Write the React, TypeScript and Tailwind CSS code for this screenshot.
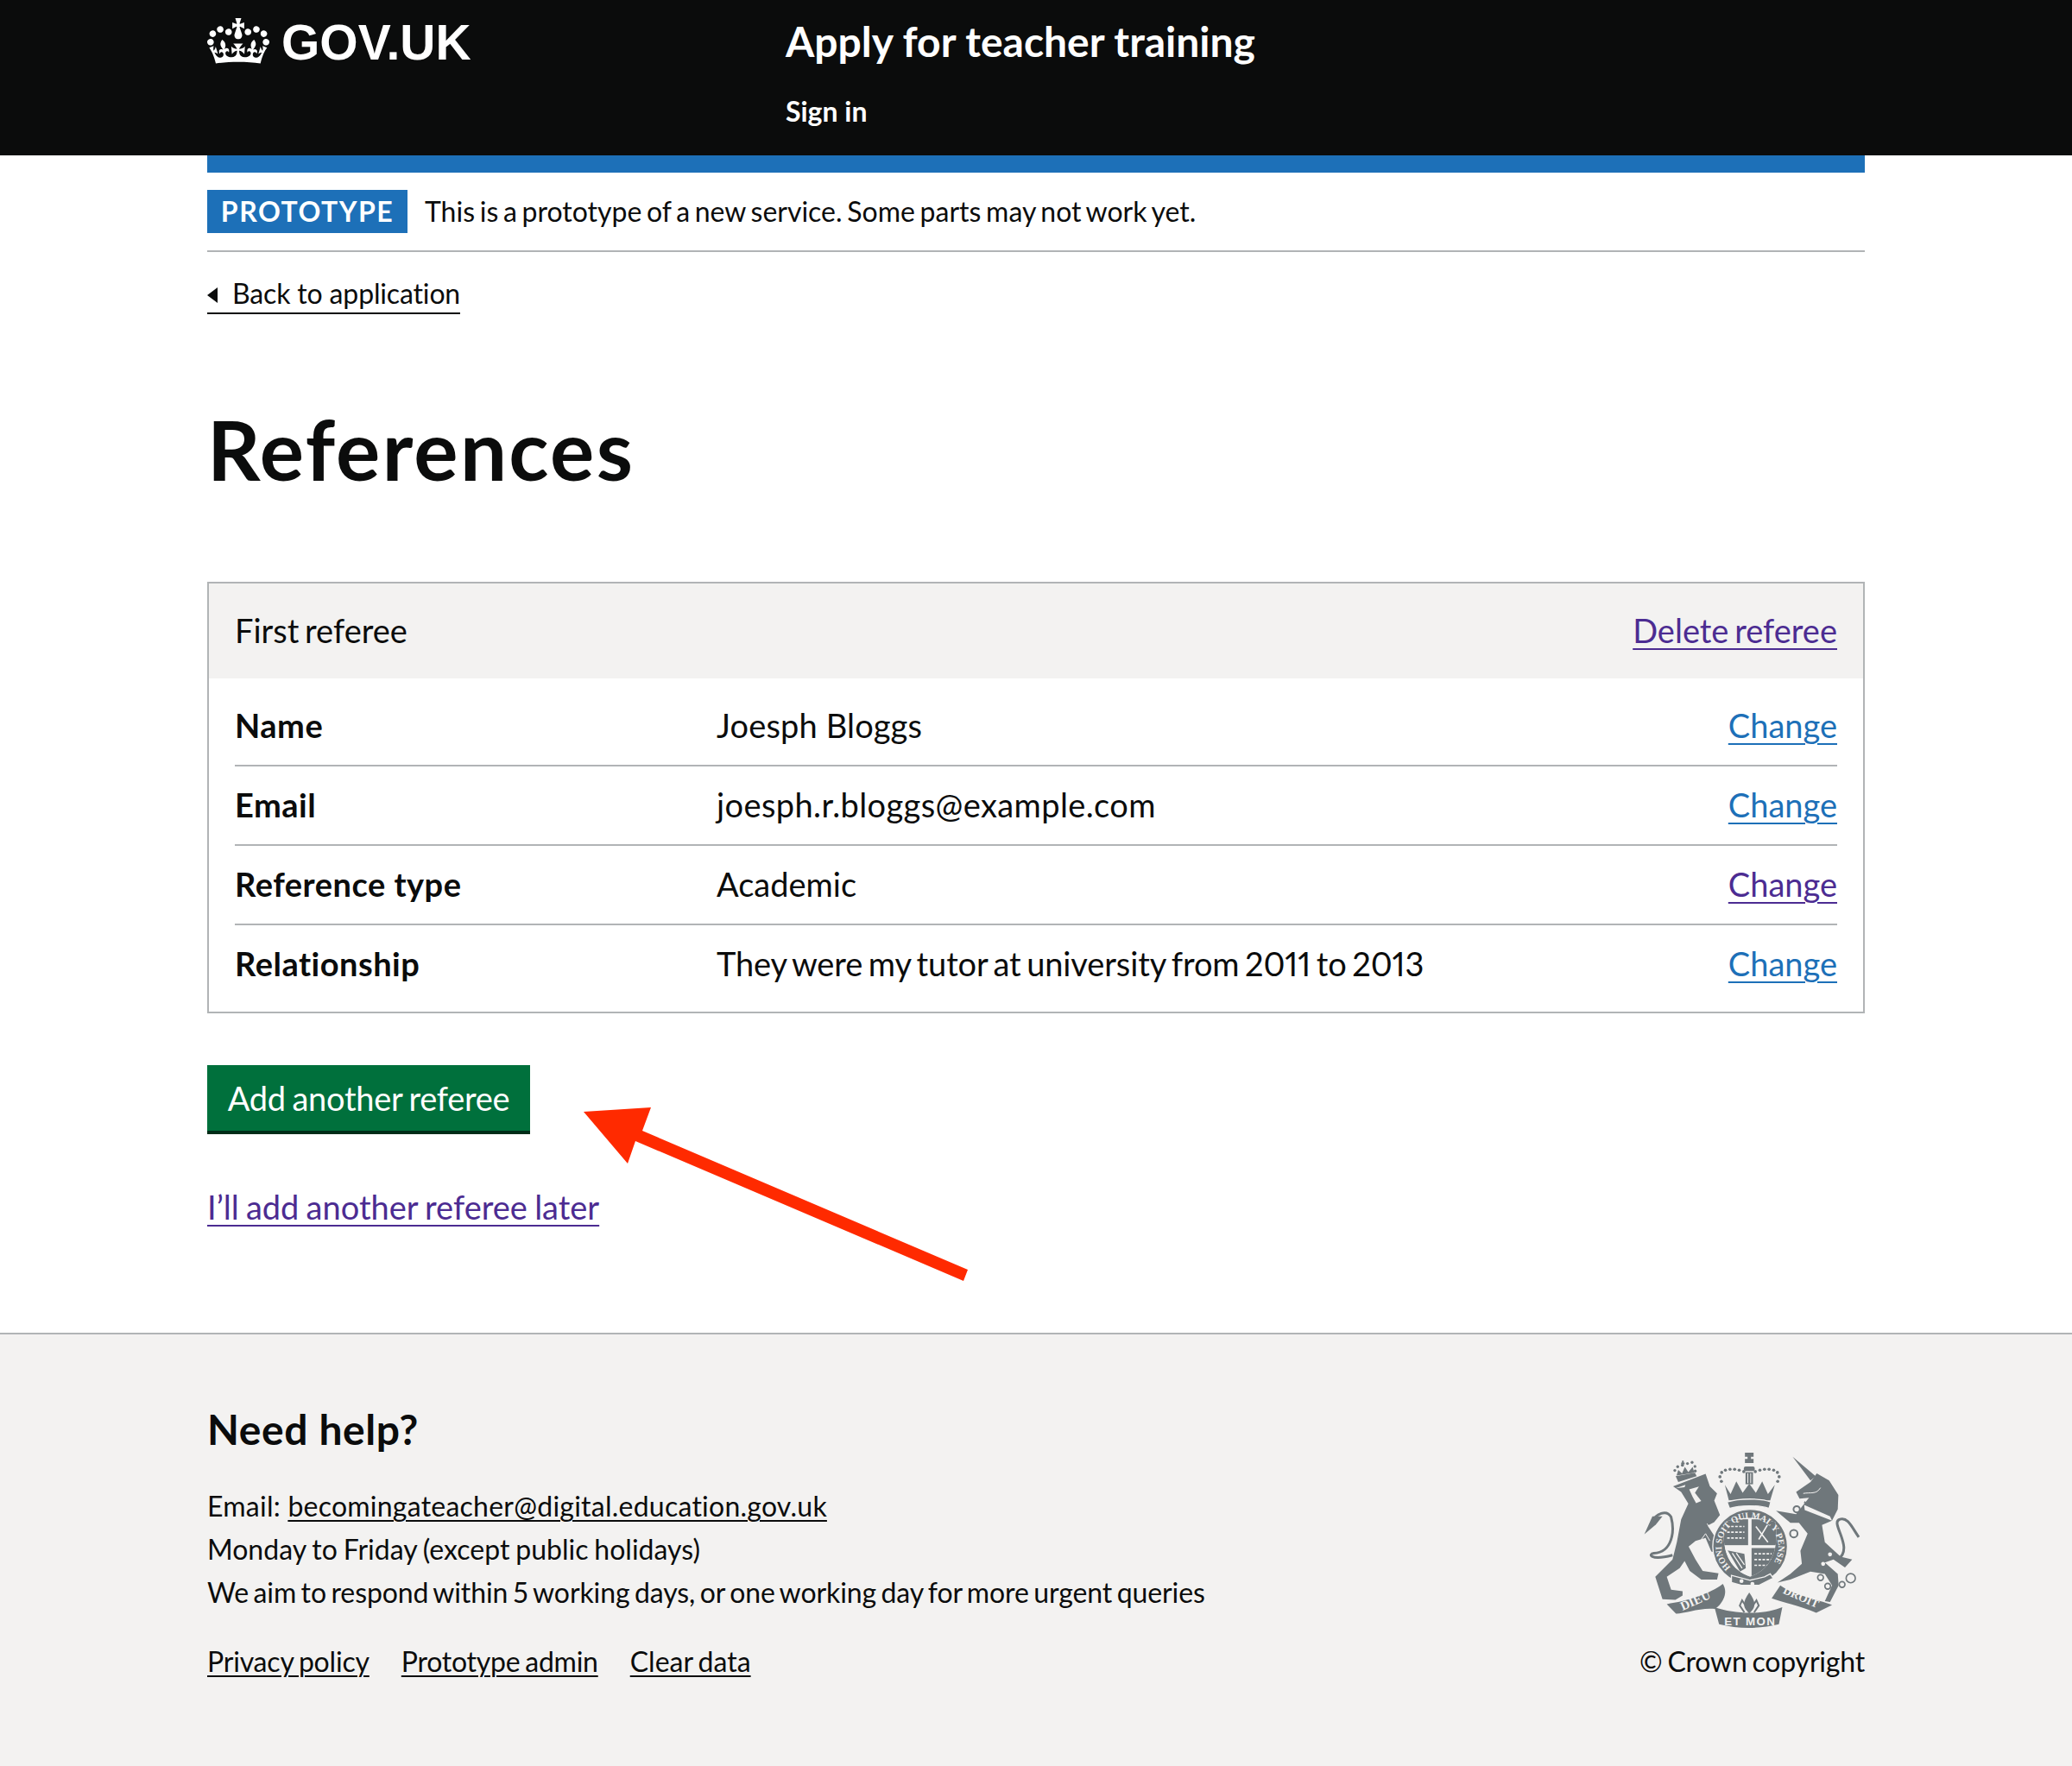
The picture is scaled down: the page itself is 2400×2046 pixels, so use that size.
import React from 'react';

const font = { fontFamily: '"Lato", "Noto Sans", sans-serif' };

const rows = [
  { key: 'Name', value: 'Joesph Bloggs', visited: false, fit: 'tracking-[0.15px]' },
  { key: 'Email', value: 'joesph.r.bloggs@example.com', visited: false, fit: 'tracking-[0.4px]' },
  { key: 'Reference type', value: 'Academic', visited: true, fit: '' },
  { key: 'Relationship', value: 'They were my tutor at university from 2011 to 2013', visited: false, fit: 'tracking-[-0.12px] [word-spacing:-3px]' },
];

const CrownLogo = () => (
  <svg viewBox="0 0 132 97" className="w-[72px] h-[53px] fill-white shrink-0">
    <path
      fillRule="evenodd"
      d="M25 30.2c3.5 1.5 7.7-.2 9.1-3.7 1.5-3.6-.2-7.8-3.9-9.2-3.6-1.4-7.6.3-9.1 3.9-1.4 3.5.3 7.5 3.9 9zM9 39.5c3.6 1.5 7.8-.2 9.2-3.7 1.5-3.6-.2-7.8-3.9-9.1-3.6-1.5-7.6.2-9.1 3.8-1.4 3.5.3 7.5 3.8 9zM4.4 57.2c3.5 1.5 7.7-.2 9.1-3.8 1.5-3.6-.2-7.7-3.9-9.1-3.5-1.5-7.6.3-9.1 3.8-1.4 3.5.3 7.6 3.9 9.1zm38.3-21.4c3.5 1.5 7.7-.2 9.1-3.8 1.5-3.6-.2-7.7-3.9-9.1-3.6-1.5-7.6.3-9.1 3.8-1.3 3.6.4 7.7 3.9 9.1zm64.4-5.6c-3.6 1.5-7.8-.2-9.1-3.7-1.5-3.6.2-7.8 3.8-9.2 3.6-1.4 7.7.3 9.2 3.9 1.3 3.5-.4 7.5-3.9 9zm15.9 9.3c-3.6 1.5-7.7-.2-9.1-3.7-1.5-3.6.2-7.8 3.7-9.1 3.6-1.5 7.7.2 9.2 3.8 1.5 3.5-.3 7.5-3.8 9zm4.7 17.7c-3.6 1.5-7.8-.2-9.2-3.8-1.5-3.6.2-7.7 3.9-9.1 3.6-1.5 7.7.3 9.2 3.8 1.3 3.5-.4 7.6-3.9 9.1zM89.3 35.8c-3.6 1.5-7.8-.2-9.2-3.8-1.4-3.6.2-7.7 3.9-9.1 3.6-1.5 7.7.3 9.2 3.8 1.4 3.6-.3 7.7-3.9 9.1zM69.7 17.7l8.9 4.7V9.3l-8.9 2.8c-.2-.3-.5-.6-.9-.9L72.4 0H59.6l3.5 11.2c-.3.3-.6.5-.9.9l-8.8-2.8v13.1l8.8-4.7c.3.3.6.7.9.9l-5 15.4v.1c-.2.8-.4 1.6-.4 2.4 0 4.1 3.1 7.5 7 8.1h.2c.3 0 .7.1 1 .1.4 0 .7 0 1-.1h.2c4-.6 7.1-4.1 7.1-8.1 0-.8-.1-1.7-.4-2.4V34l-5.1-15.4c.4-.2.7-.6 1-.9zM66 92.8c16.9 0 32.8 1.1 47.1 3.2 4-16.9 8.9-26.7 14-33.5l-9.6-3.4c1 4.9 1.1 7.2 0 10.2-1.5-1.4-3-4.3-4.2-8.7L108.6 76c2.8-2 5-3.2 7.5-3.3-4.4 9.4-10 11.9-13.6 11.2-4.3-.8-6.3-4.6-5.6-7.9 1-4.7 5.7-5.9 8-.5 4.3-8.7-3-11.4-7.6-8.8 7.1-7.2 7.9-13.5 2.1-21.1-8 6.1-8.1 12.3-4.5 20.8-4.7-5.4-12.1-2.5-9.5 6.2 3.4-5.2 7.9-2 7.2 3.1-.6 4.3-6.4 7.8-13.5 7.2-10.3-.9-10.9-8-11.2-13.8 2.5-.5 7.1 1.8 11 7.3L80.2 60c-4.1 4.4-8 5.3-12.3 5.4 1.4-4.4 8-11.6 8-11.6H55.5s6.4 7.2 7.9 11.6c-4.2-.1-8-1-12.3-5.4l1.4 16.4c3.9-5.5 8.5-7.7 10.9-7.3-.3 5.8-.9 12.8-11.1 13.8-7.2.6-12.9-2.9-13.5-7.2-.7-5 3.8-8.3 7.1-3.1 2.7-8.7-4.6-11.6-9.4-6.2 3.7-8.5 3.6-14.7-4.6-20.8-5.8 7.6-5 13.9 2.2 21.1-4.7-2.6-11.9.1-7.7 8.8 2.3-5.5 7.1-4.2 8.1.5.7 3.3-1.3 7.1-5.7 7.9-3.5.7-9-1.8-13.5-11.2 2.5.1 4.7 1.3 7.5 3.3l-4.7-15.4c-1.2 4.4-2.7 7.2-4.3 8.7-1.1-3-.9-5.3 0-10.2l-9.5 3.4c5 6.9 9.9 16.7 14 33.5 14.8-2.1 30.8-3.2 47.7-3.2z"
    />
  </svg>
);

// royal coat of arms, drawn by hand against the reference
const Crest = () => {
  const c = '#6f777b';
  const bg = '#f3f2f1';
  const beads = [
    [340, 168], [335, 152], [341, 137], [354, 129], [370, 126], [386, 126], [402, 129], [418, 134],
    [458, 134], [474, 129], [490, 126], [506, 126], [522, 129], [535, 137], [541, 152], [536, 168],
  ];
  const lionBeads = [
    [178, 130], [188, 117], [204, 112], [222, 106], [238, 102], [248, 116], [249, 132],
  ];
  const serif = { fontFamily: '"Liberation Serif", serif' };
  const sans = { fontFamily: '"Liberation Sans", sans-serif' };
  return (
    <svg viewBox="70 60 760 620" className="w-[253px] h-[207px] mr-[3px]">
      <defs>
        <path id="garter" d="M372 468 A99 99 0 1 1 510 465" />
        <clipPath id="shield">
          <path d="M350 310 Q440 280 528 310 C540 400 520 470 440 500 C360 470 340 400 350 310 Z" />
        </clipPath>
      </defs>
      {/* lion crown */}
      {lionBeads.map(([x, y]) => (
        <circle key={`${x}-${y}`} cx={x} cy={y} r="5" fill={c} />
      ))}
      <path d="M184 148 L190 128 L203 140 L213 118 L225 136 L240 118 L246 138 Z" fill={c} />
      <path d="M181 150 L248 138 L254 150 L190 170 Z" fill={c} />
      <path d="M200 106 h12 M206 96 v20" stroke={c} strokeWidth="6" />
      {/* lion */}
      <path
        d="M172 185 L285 142 L300 185 L325 210 L315 235 L335 285 L315 310 L292 322 L340 395 L335 420 L305 412 L285 365 L250 375 L226 395 L250 440 L275 480 L330 488 L325 510 L270 510 L230 480 L212 445 L195 470 L150 500 L165 545 L205 550 L205 565 L180 580 L135 578 L110 500 L170 440 L185 380 L200 300 L225 245 L200 205 Z"
        fill={c}
      />
      <path d="M228 196 L262 186 L248 208 L270 236 L252 244 L240 222 Z" fill={bg} />
      <path d="M180 192 L215 180 L212 188 Z" fill={bg} />
      <path d="M290 315 L330 370 M270 370 L285 350 L300 375" stroke={bg} strokeWidth="3" fill="none" />
      <path d="M170 425 C90 445 85 420 105 418 C170 415 178 340 165 292 C150 265 110 280 100 310" fill="none" stroke={c} strokeWidth="9" />
      <path d="M100 290 L72 352 L112 318 L135 290 Z" fill={c} />
      {/* unicorn */}
      <path d="M588 82 L668 150 L650 165 Z" fill={c} />
      <path
        d="M600 205 L650 170 L672 140 L715 165 L747 215 L745 265 L725 305 L690 320 L700 380 L755 430 L795 440 L770 468 L730 440 L700 450 L745 490 L748 530 L718 588 L700 585 L725 530 L700 490 L650 482 L580 510 L535 520 L580 490 L620 455 L615 410 L640 350 L610 312 L580 312 L530 270 L600 282 L625 250 L645 225 L612 228 Z"
        fill={c}
      />
      <path d="M628 250 L718 290 L725 305 L630 268 Z" fill={bg} />
      <path d="M628 240 L722 282" stroke={c} strokeWidth="6" strokeDasharray="5 5" />
      <path d="M625 210 C650 205 670 215 685 190" stroke={bg} strokeWidth="3" fill="none" />
      <circle cx="602" cy="265" r="11" fill={bg} stroke={c} strokeWidth="6" />
      <circle cx="592" cy="350" r="13" fill={bg} stroke={c} strokeWidth="6" />
      <circle cx="726" cy="373" r="9" fill={bg} />
      <circle cx="718" cy="422" r="7" fill={bg} />
      <circle cx="694" cy="455" r="7" fill={bg} />
      <path d="M745 440 C805 400 715 310 752 300 C780 290 795 330 818 362" fill="none" stroke={c} strokeWidth="9" />
      <circle cx="685" cy="503" r="10" fill="none" stroke={c} strokeWidth="5" />
      <circle cx="710" cy="533" r="10" fill="none" stroke={c} strokeWidth="5" />
      <circle cx="760" cy="527" r="10" fill="none" stroke={c} strokeWidth="5" />
      <circle cx="790" cy="505" r="16" fill="none" stroke={c} strokeWidth="5" />
      {/* royal crown */}
      {beads.map(([x, y]) => (
        <circle key={`${x}-${y}`} cx={x} cy={y} r="5.5" fill={c} />
      ))}
      <path d="M422 68 h30 v14 h-9 v8 h9 v14 h-30 v-14 h9 v-8 h-9 z" fill={c} />
      <rect x="418" y="116" width="38" height="16" rx="6" fill={c} />
      <rect x="424" y="136" width="26" height="42" fill={c} />
      <path d="M432 140 v34 M442 140 v34" stroke={bg} strokeWidth="3" />
      <path d="M352 180 L372 212 L392 168 L414 208 L437 176 L460 208 L482 168 L502 212 L526 180 L510 234 L366 234 Z" fill={c} />
      <path d="M360 240 C400 226 480 226 512 240 L506 262 C470 250 405 250 368 262 Z" fill={c} stroke={bg} strokeWidth="4" />
      {/* garter and shield */}
      <circle cx="440" cy="395" r="130" fill={c} stroke={bg} strokeWidth="4" />
      <path d="M350 310 Q440 280 528 310 C540 400 520 470 440 500 C360 470 340 400 350 310 Z" fill={bg} />
      <g clipPath="url(#shield)">
        <rect x="345" y="300" width="88" height="90" fill={c} />
        <rect x="445" y="300" width="88" height="90" fill={c} />
        <rect x="345" y="400" width="88" height="100" fill={bg} />
        <rect x="445" y="400" width="88" height="100" fill={c} />
        <path d="M360 325 h60 M360 345 h60 M360 365 h60 M455 420 h60 M455 440 h60 M455 460 h60" stroke={bg} strokeWidth="5" strokeDasharray="9 5" />
        <path d="M460 325 l42 55 M500 320 l-30 50" stroke={bg} strokeWidth="5" />
        <path d="M362 408 L420 420 L425 470 L405 482 Z" fill={c} />
        <path d="M378 418 L412 470 M392 418 L420 458" stroke={bg} strokeWidth="4" />
      </g>
      <text fill={bg} fontSize="31" fontWeight="700" style={serif}>
        <textPath href="#garter" textLength="448">HONI SOIT QUI MAL Y PENSE</textPath>
      </text>
      <path d="M375 495 L395 500 L440 512 L490 500 L510 490 L520 505 L470 530 L410 530 L375 520 Z" fill={c} stroke={bg} strokeWidth="4" />
      <circle cx="410" cy="515" r="7" fill={bg} />
      <circle cx="448" cy="525" r="7" fill={bg} />
      {/* fleur */}
      <path d="M437 555 C455 580 462 600 446 618 L437 628 L428 618 C412 600 419 580 437 555 Z" fill={c} />
      <path d="M424 600 L412 582 L404 600 L420 624 M450 600 L462 582 L470 600 L454 624" fill="none" stroke={c} strokeWidth="6" />
      {/* motto scroll */}
      <path d="M150 595 C220 585 300 560 345 525 C368 560 338 600 318 612 C270 605 205 630 182 628 Z" fill={c} />
      <path d="M545 530 C590 565 680 580 725 598 L670 625 C610 600 555 590 515 575 Z" fill={c} />
      <path d="M316 606 C390 632 490 632 552 606 L540 665 C470 682 400 682 332 665 Z" fill={c} />
      <text x="205" y="618" fill={bg} fontSize="44" fontWeight="700" transform="rotate(-24 205 618)" style={serif}>
        DIEU
      </text>
      <text x="350" y="668" fill={bg} fontSize="40" fontWeight="700" textLength="176" style={sans}>
        ET MON
      </text>
      <text x="552" y="556" fill={bg} fontSize="40" fontWeight="700" transform="rotate(24 552 556)" style={serif}>
        DROIT
      </text>
    </svg>
  );
};

const Arrow = () => (
  <svg className="absolute left-0 top-0 w-[2400px] h-[2046px] pointer-events-none" viewBox="0 0 2400 2046">
    <path d="M676 1288 L754 1283 L744 1310 L1121 1471 L1116 1484 L736 1322 L727 1348 Z" fill="#ff2a00" />
  </svg>
);

export default function App() {
  return (
    <div className="relative w-[2400px] h-[2046px] bg-white text-[#0b0c0c] overflow-hidden" style={font}>
      <header className="bg-[#0b0c0c] h-[180px] text-white">
        <div className="w-[1920px] mx-auto flex pt-[20px]">
          <div className="w-[670px] flex items-center gap-[14px] h-[54px]">
            <CrownLogo />
            <span className="text-[57px] leading-none font-bold pt-[5px]" style={{ fontFamily: '"Liberation Sans", sans-serif' }}>
              GOV.UK
            </span>
          </div>
          <div className="-mt-[2px]">
            <div className="text-[48px] leading-[60px] font-bold">Apply for teacher training</div>
            <div className="text-[32px] leading-[40px] font-bold mt-[31px]">Sign in</div>
          </div>
        </div>
      </header>

      <div className="w-[1920px] mx-auto">
        <div className="h-[20px] bg-[#1d70b8]" />
        <div className="h-[92px] border-b-2 border-[#b1b4b6] flex items-start pt-[20px] gap-[20px] text-[32px] leading-[50px]">
          <span className="bg-[#1d70b8] text-white font-bold h-[50px] w-[232px] text-center tracking-[1.5px] leading-[50px]">PROTOTYPE</span>
          <span className="[word-spacing:-2.5px]">This is a prototype of a new service. Some parts may not work yet.</span>
        </div>

        <a className="mt-[26px] inline-flex items-center h-[46px] border-b-2 border-[#0b0c0c] text-[32px] leading-[40px] tracking-[-0.15px]">
          <span className="w-0 h-0 border-y-[9px] border-y-transparent border-r-[12px] border-r-[#0b0c0c] mr-[17px] mt-[3px]" />
          Back to application
        </a>

        <h1 className="text-[96px] leading-[100px] font-bold mt-[106px] tracking-[2.3px]">References</h1>

        <div className="mt-[104px] border-2 border-[#b1b4b6]">
          <div className="h-[110px] bg-[#f3f2f1] px-[30px] pb-[2px] flex items-center justify-between text-[38px] [word-spacing:-3px]">
            <span>First referee</span>
            <a className="underline text-[#4c2c92] decoration-2 underline-offset-[6px]">Delete referee</a>
          </div>
          <div className="px-[30px] pt-[10px] pb-[10px]">
            {rows.map((row, i) => (
              <div
                key={row.key}
                className={`flex items-center pb-[2px] text-[38px] ${i < rows.length - 1 ? 'h-[92px] border-b-2 border-[#b1b4b6]' : 'h-[90px]'}`}
              >
                <span className="w-[558px] font-bold tracking-[0.5px]">{row.key}</span>
                <span className={`flex-1 proportional-nums ${row.fit}`}>{row.value}</span>
                <a className={`underline decoration-2 underline-offset-[6px] ${row.visited ? 'text-[#4c2c92]' : 'text-[#1d70b8]'}`}>Change</a>
              </div>
            ))}
          </div>
        </div>

        <button className="mt-[60px] block h-[76px] w-[374px] bg-[#00703c] text-white text-[38px] tracking-[-0.3px] [word-spacing:-1.6px] shadow-[0_4px_0_#002d18]">
          Add another referee
        </button>

        <a className="mt-[63px] block w-fit text-[38px] leading-[50px] text-[#4c2c92] underline decoration-2 underline-offset-[6px] [word-spacing:-1.5px]">
          I’ll add another referee later
        </a>
      </div>

      <footer className="absolute left-0 right-0 top-[1544px] bottom-0 bg-[#f3f2f1] border-t-2 border-[#b1b4b6]">
        <div className="w-[1920px] mx-auto flex justify-between pt-[80px]">
          <div className="text-[32px] leading-[50px]">
            <h2 className="text-[48px] leading-[60px] font-bold tracking-[0.6px]">Need help?</h2>
            <div className="mt-[34px]">
              <p className="tracking-[0.24px]">
                Email: <a className="underline decoration-2 underline-offset-4">becomingateacher@digital.education.gov.uk</a>
              </p>
              <p className="[word-spacing:-1.3px]">Monday to Friday (except public holidays)</p>
              <p className="tracking-[-0.1px] [word-spacing:-2.6px]">We aim to respond within 5 working days, or one working day for more urgent queries</p>
            </div>
            <div className="flex gap-[37px] mt-[30px] [word-spacing:-2px]">
              <a className="underline decoration-2 underline-offset-4 tracking-[-0.2px]">Privacy policy</a>
              <a className="underline decoration-2 underline-offset-4 tracking-[-0.25px]">Prototype admin</a>
              <a className="underline decoration-2 underline-offset-4">Clear data</a>
            </div>
          </div>
          <div className="flex flex-col items-end pt-[54px] text-[32px] leading-[50px]">
            <Crest />
            <span className="mt-[13px] tracking-[-0.2px] [word-spacing:-2px]">© Crown copyright</span>
          </div>
        </div>
      </footer>

      <Arrow />
    </div>
  );
}
